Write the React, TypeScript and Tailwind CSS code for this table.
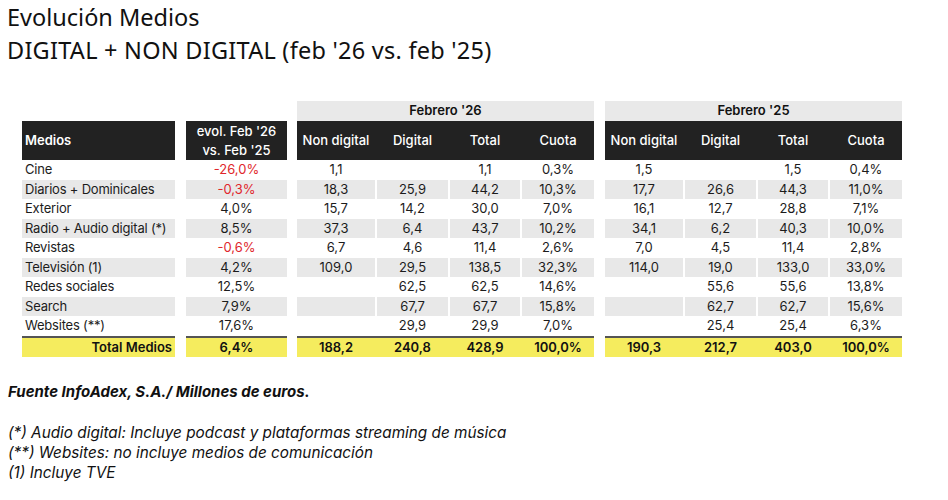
import React from "react";

type Row = { name: string; evol: string; a: string[]; b: string[] };

const rows: Row[] = [
  { name: "Cine", evol: "-26,0%", a: ["1,1", "", "1,1", "0,3%"], b: ["1,5", "", "1,5", "0,4%"] },
  { name: "Diarios + Dominicales", evol: "-0,3%", a: ["18,3", "25,9", "44,2", "10,3%"], b: ["17,7", "26,6", "44,3", "11,0%"] },
  { name: "Exterior", evol: "4,0%", a: ["15,7", "14,2", "30,0", "7,0%"], b: ["16,1", "12,7", "28,8", "7,1%"] },
  { name: "Radio + Audio digital (*)", evol: "8,5%", a: ["37,3", "6,4", "43,7", "10,2%"], b: ["34,1", "6,2", "40,3", "10,0%"] },
  { name: "Revistas", evol: "-0,6%", a: ["6,7", "4,6", "11,4", "2,6%"], b: ["7,0", "4,5", "11,4", "2,8%"] },
  { name: "Televisión (1)", evol: "4,2%", a: ["109,0", "29,5", "138,5", "32,3%"], b: ["114,0", "19,0", "133,0", "33,0%"] },
  { name: "Redes sociales", evol: "12,5%", a: ["", "62,5", "62,5", "14,6%"], b: ["", "55,6", "55,6", "13,8%"] },
  { name: "Search", evol: "7,9%", a: ["", "67,7", "67,7", "15,8%"], b: ["", "62,7", "62,7", "15,6%"] },
  { name: "Websites (**)", evol: "17,6%", a: ["", "29,9", "29,9", "7,0%"], b: ["", "25,4", "25,4", "6,3%"] },
];

const colW = ["w-[78px]", "w-[71px]", "w-[70px]", "w-[72px]"];
const heads = ["Non digital", "Digital", "Total", "Cuota"];

function Block({ title, pick, totals }: { title: string; pick: (r: Row) => string[]; totals: string[] }) {
  return (
    <div className="flex flex-col w-[297px]">
      <div className="h-[20px] bg-[#e9e9e9] flex items-center justify-center text-[13px] font-semibold text-[#111]">{title}</div>
      <div className="h-[39px] bg-[#222222] flex">
        {heads.map((h, i) => (
          <div key={h} className={`${colW[i]} flex items-center justify-center text-[13px] font-medium text-white ${i > 0 ? "ml-[2px]" : ""}`}>
            {h}
          </div>
        ))}
      </div>
      {rows.map((r, ri) => (
        <div key={ri} className="h-[19.55px] flex">
          {pick(r).map((v, i) => (
            <div
              key={i}
              className={`${colW[i]} ${i > 0 ? "ml-[2px]" : ""} ${ri % 2 === 1 ? "bg-[#e8e8e8]" : ""} flex items-center justify-center text-[13px] text-[#1c1c1c]`}
            >
              {v}
            </div>
          ))}
        </div>
      ))}
      <div className="h-[2px] bg-[#555]" />
      <div className="h-[19px] bg-[#f5ec5e] flex">
        {totals.map((v, i) => (
          <div key={i} className={`${colW[i]} ${i > 0 ? "ml-[2px]" : ""} flex items-center justify-center text-[13px] font-semibold text-[#111]`}>
            {v}
          </div>
        ))}
      </div>
    </div>
  );
}

export default function App() {
  return (
    <div className="w-[948px] h-[500px] bg-white overflow-hidden relative" style={{ fontFamily: "Inter, 'Liberation Sans', sans-serif" }}>
      <div className="pl-[7px] pt-[1px] text-[23.5px] leading-[33px] text-[#111]" style={{ fontFamily: "'Noto Sans', 'Open Sans', sans-serif" }}>
        <div>Evolución Medios</div>
        <div className="tracking-[0.25px]">DIGITAL + NON DIGITAL (feb '26 vs. feb '25)</div>
      </div>

      <div className="flex mt-[34px] ml-[22px]">
        {/* Medios column */}
        <div className="flex flex-col w-[153px]">
          <div className="h-[20px]" />
          <div className="h-[39px] bg-[#222222] flex items-center pl-[3px] text-[13px] font-semibold text-white">Medios</div>
          {rows.map((r, ri) => (
            <div key={ri} className={`h-[19.55px] flex items-center pl-[3px] text-[13px] tracking-[-0.2px] text-[#1c1c1c] ${ri % 2 === 1 ? "bg-[#e8e8e8]" : ""}`}>
              {r.name}
            </div>
          ))}
          <div className="h-[2px] bg-[#555]" />
          <div className="h-[19px] bg-[#f5ec5e] flex items-center justify-end pr-[3px] text-[13px] font-semibold text-[#111]">Total Medios</div>
        </div>

        {/* evol column */}
        <div className="flex flex-col w-[101px] ml-[11px]">
          <div className="h-[20px]" />
          <div className="h-[39px] bg-[#222222] flex flex-col items-center justify-center text-[13px] leading-[19px] font-medium text-white">
            <span>evol. Feb '26</span>
            <span>vs. Feb '25</span>
          </div>
          {rows.map((r, ri) => (
            <div
              key={ri}
              className={`h-[19.55px] flex items-center justify-center text-[13px] ${r.evol.startsWith("-") ? "text-[#e0262c]" : "text-[#1c1c1c]"} ${ri % 2 === 1 ? "bg-[#e8e8e8]" : ""}`}
            >
              {r.evol}
            </div>
          ))}
          <div className="h-[2px] bg-[#555]" />
          <div className="h-[19px] bg-[#f5ec5e] flex items-center justify-center text-[13px] font-semibold text-[#111]">6,4%</div>
        </div>

        <div className="ml-[10px]">
          <Block title="Febrero '26" pick={(r) => r.a} totals={["188,2", "240,8", "428,9", "100,0%"]} />
        </div>
        <div className="ml-[11px]">
          <Block title="Febrero '25" pick={(r) => r.b} totals={["190,3", "212,7", "403,0", "100,0%"]} />
        </div>
      </div>

      <div className="pl-[8px] mt-[25px] leading-[20px] italic text-[#111]">
        <div className="font-bold text-[15px]">Fuente InfoAdex, S.A./ Millones de euros.</div>
        <div className="h-[21px]" />
        <div className="text-[15.3px]">(*) Audio digital: Incluye podcast y plataformas streaming de música</div>
        <div className="text-[15.3px]">(**) Websites: no incluye medios de comunicación</div>
        <div className="text-[15.3px]">(1) Incluye TVE</div>
      </div>
    </div>
  );
}
